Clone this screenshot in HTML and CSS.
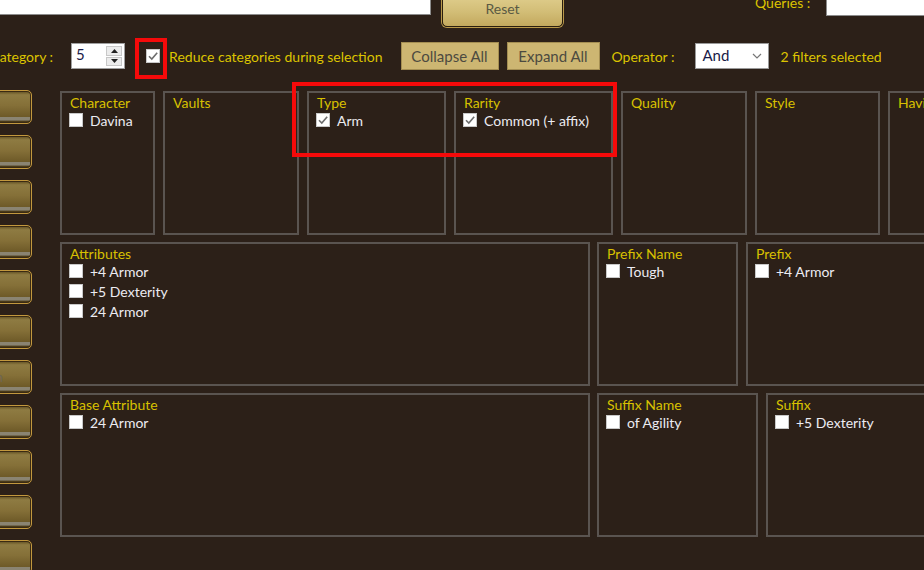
FILE: index.html
```html
<!DOCTYPE html>
<html>
<head>
<meta charset="utf-8">
<link rel="stylesheet" href="styles.css">
</head>
<body>
<div class="page">
  <div class="topbar">
    <div class="search"></div>
    <button class="reset">Reset</button>
    <span class="label queries">Queries :</span>
    <div class="queries-input"></div>
  </div>

  <div class="toolbar">
    <span class="label cat">category :</span>
    <div class="spin">
      <span class="spin-val">5</span>
      <div class="spin-btns">
        <span class="spin-btn"><svg width="7" height="4" viewBox="0 0 7 4"><path d="M0 4 L3.5 0 L7 4 Z" fill="#222"/></svg></span>
        <span class="spin-btn"><svg width="7" height="4" viewBox="0 0 7 4"><path d="M0 0 L3.5 4 L7 0 Z" fill="#222"/></svg></span>
      </div>
    </div>
    <span class="box checked reduce-box"><svg width="12" height="12" viewBox="0 0 12 12"><path d="M2 6.2 L4.8 9 L10.2 2.8" fill="none" stroke="#6d6d6d" stroke-width="1.6"/></svg></span>
    <span class="label reduce">Reduce categories during selection</span>
    <button class="tbtn collapse">Collapse All</button>
    <button class="tbtn expand">Expand All</button>
    <span class="label operator">Operator :</span>
    <div class="select"><span>And</span><svg width="10" height="6" viewBox="0 0 10 6"><path d="M1 1 L5 5 L9 1" fill="none" stroke="#777" stroke-width="1.2"/></svg></div>
    <span class="label filters">2 filters selected</span>
  </div>

  <div class="main">
    <div class="sidebar">
      <div class="side-btn"></div>
      <div class="side-btn"></div>
      <div class="side-btn"></div>
      <div class="side-btn"></div>
      <div class="side-btn"></div>
      <div class="side-btn"></div>
      <div class="side-btn"><span class="side-text">Weapon</span></div>
      <div class="side-btn"></div>
      <div class="side-btn"></div>
      <div class="side-btn"></div>
      <div class="side-btn"></div>
    </div>

    <div class="panels">
      <div class="row">
        <div class="panel w-char">
          <div class="ph">Character</div>
          <div class="item"><span class="box"></span><span>Davina</span></div>
        </div>
        <div class="panel w-vaults"><div class="ph">Vaults</div></div>
        <div class="panel w-type">
          <div class="ph">Type</div>
          <div class="item"><span class="box checked"><svg width="12" height="12" viewBox="0 0 12 12"><path d="M2 6.2 L4.8 9 L10.2 2.8" fill="none" stroke="#6d6d6d" stroke-width="1.6"/></svg></span><span>Arm</span></div>
        </div>
        <div class="panel w-rarity">
          <div class="ph">Rarity</div>
          <div class="item"><span class="box checked"><svg width="12" height="12" viewBox="0 0 12 12"><path d="M2 6.2 L4.8 9 L10.2 2.8" fill="none" stroke="#6d6d6d" stroke-width="1.6"/></svg></span><span>Common (+ affix)</span></div>
        </div>
        <div class="panel w-quality"><div class="ph">Quality</div></div>
        <div class="panel w-style"><div class="ph">Style</div></div>
        <div class="panel w-having"><div class="ph">Having</div></div>
      </div>

      <div class="row">
        <div class="panel w-wide">
          <div class="ph">Attributes</div>
          <div class="item"><span class="box"></span><span>+4 Armor</span></div>
          <div class="item"><span class="box"></span><span>+5 Dexterity</span></div>
          <div class="item"><span class="box"></span><span>24 Armor</span></div>
        </div>
        <div class="panel w-pname">
          <div class="ph">Prefix Name</div>
          <div class="item"><span class="box"></span><span>Tough</span></div>
        </div>
        <div class="panel w-rest">
          <div class="ph">Prefix</div>
          <div class="item"><span class="box"></span><span>+4 Armor</span></div>
        </div>
      </div>

      <div class="row">
        <div class="panel w-wide">
          <div class="ph">Base Attribute</div>
          <div class="item"><span class="box"></span><span>24 Armor</span></div>
        </div>
        <div class="panel w-sname">
          <div class="ph">Suffix Name</div>
          <div class="item"><span class="box"></span><span>of Agility</span></div>
        </div>
        <div class="panel w-rest">
          <div class="ph">Suffix</div>
          <div class="item"><span class="box"></span><span>+5 Dexterity</span></div>
        </div>
      </div>
    </div>
  </div>

  <div class="mark mark-reduce"></div>
  <div class="mark mark-filters"></div>
</div>
</body>
</html>
```

FILE: styles.css
```css
* { box-sizing: border-box; }
html, body {
  margin: 0;
  padding: 0;
  width: 924px;
  height: 570px;
  overflow: hidden;
  background: #2c2018;
}
.page {
  position: relative;
  width: 924px;
  height: 570px;
  overflow: hidden;
  font-family: Lato, "Open Sans", sans-serif;
  font-size: 14px;
}
.label {
  color: #dcc400;
  font-size: 14px;
  white-space: nowrap;
}

/* top bar */
.topbar {
  display: flex;
  align-items: flex-start;
  height: 30px;
}
.search {
  width: 431px;
  height: 15px;
  background: #fff;
  border: 1px solid #8c8c8c;
  border-top: none;
  border-left: none;
  flex: none;
}
.reset {
  flex: none;
  margin-left: 11px;
  margin-top: -10px;
  width: 121px;
  height: 37px;
  padding: 0;
  border: 1px solid #2a1e0e;
  border-radius: 0 0 5px 5px;
  box-shadow: 0 0 0 1px #b8984a;
  background: linear-gradient(#e4d394, #d2bd76 60%, #c3a95e);
  color: #5a5a44;
  font-family: Lato, sans-serif;
  font-size: 14px;
}
.queries {
  margin-left: 192px;
  margin-top: -6px;
  flex: none;
}
.queries-input {
  flex: none;
  margin-left: 16px;
  width: 120px;
  height: 16px;
  background: #fff;
  border: 1px solid #8c8c8c;
  border-top: none;
}

/* toolbar */
.toolbar {
  display: flex;
  align-items: center;
  height: 28px;
  margin-top: 12px;
}
.cat { margin-left: -7px; }
.spin {
  flex: none;
  margin-left: 18px;
  width: 54px;
  height: 26px;
  background: #fff;
  border: 1px solid #a0a0a0;
  display: flex;
  align-items: stretch;
}
.spin-val {
  flex: 1;
  color: #1a1a48;
  font-size: 15px;
  padding-left: 4px;
  line-height: 20px;
}
.spin-btns {
  width: 18px;
  display: flex;
  flex-direction: column;
  padding: 2px 2px 2px 0;
  gap: 1px;
}
.spin-btn {
  flex: 1;
  background: #ececec;
  border: 1px solid #c8c8c8;
  display: flex;
  align-items: center;
  justify-content: center;
}
.box {
  flex: none;
  width: 14px;
  height: 14px;
  background: #fff;
  border: 1px solid #c8c8c8;
  display: inline-flex;
  align-items: center;
  justify-content: center;
}
.reduce-box { margin-left: 21px; }
.reduce { margin-left: 9px; }
.tbtn {
  flex: none;
  height: 28px;
  background: #cdb672;
  border: 1px solid #a48e52;
  color: #4c4a40;
  font-family: Lato, sans-serif;
  font-size: 15px;
  padding: 0;
}
.collapse { width: 98px; margin-left: 18px; }
.expand { width: 93px; margin-left: 8px; }
.operator { margin-left: 12px; }
.select {
  flex: none;
  margin-left: 21px;
  width: 74px;
  height: 26px;
  background: #fff;
  border: 1px solid #9a9a9a;
  display: flex;
  align-items: center;
  justify-content: space-between;
  padding: 0 6px 0 6px;
  color: #1a1a48;
  font-size: 15px;
}
.select span { margin-top: -3px; }
.filters { margin-left: 11px; }

/* main */
.main {
  display: flex;
  align-items: flex-start;
  margin-top: 20px;
}
.sidebar {
  flex: none;
  width: 32px;
  margin-right: 28px;
  display: flex;
  flex-direction: column;
  gap: 11px;
}
.side-btn {
  flex: none;
  width: 100px;
  height: 34px;
  margin-left: -68px;
  border: 1px solid #c2983e;
  border-radius: 5px;
  box-shadow: inset 0 0 0 1px #3a2a12;
  background: linear-gradient(#5e4c20 0, #8e7b42 12%, #857038 45%, #6e5a28 80%, #8a8472 82%, #8a8472 91%, #4a3a18 94%);
  display: flex;
  align-items: center;
  justify-content: flex-end;
  padding-right: 28px;
}
.side-text {
  color: #6e6654;
  font-size: 13px;
}

.panels {
  flex: 1;
  display: flex;
  flex-direction: column;
  gap: 7px;
  margin-top: 1px;
}
.row {
  display: flex;
  gap: 8px;
  height: 144px;
}
.panel {
  flex: none;
  height: 144px;
  border: 2px solid #5a5450;
  padding: 0 8px;
}
.w-char { width: 95px; }
.w-vaults { width: 136px; }
.w-type { width: 139px; }
.w-rarity { width: 159px; }
.w-quality { width: 126px; }
.w-style { width: 125px; }
.w-having { width: 150px; }
.w-wide { width: 530px; }
.w-pname { width: 141px; margin-left: -1px; }
.w-sname { width: 161px; margin-left: -1px; }
.w-rest { width: 200px; }

.ph {
  color: #d8c000;
  font-size: 14px;
  line-height: 18px;
  margin-top: 1px;
  margin-bottom: -2px;
  white-space: nowrap;
}
.item {
  display: flex;
  align-items: center;
  height: 20px;
  color: #ececf2;
  font-size: 14px;
  white-space: nowrap;
  margin-left: -1px;
}
.item .box { margin-right: 7px; }

/* annotation marks */
.mark {
  position: absolute;
  border: 4px solid #f50a0a;
}
.mark-reduce {
  left: 135px;
  top: 38px;
  width: 32px;
  height: 41px;
}
.mark-filters {
  left: 292px;
  top: 82px;
  width: 325px;
  height: 75px;
}
```
